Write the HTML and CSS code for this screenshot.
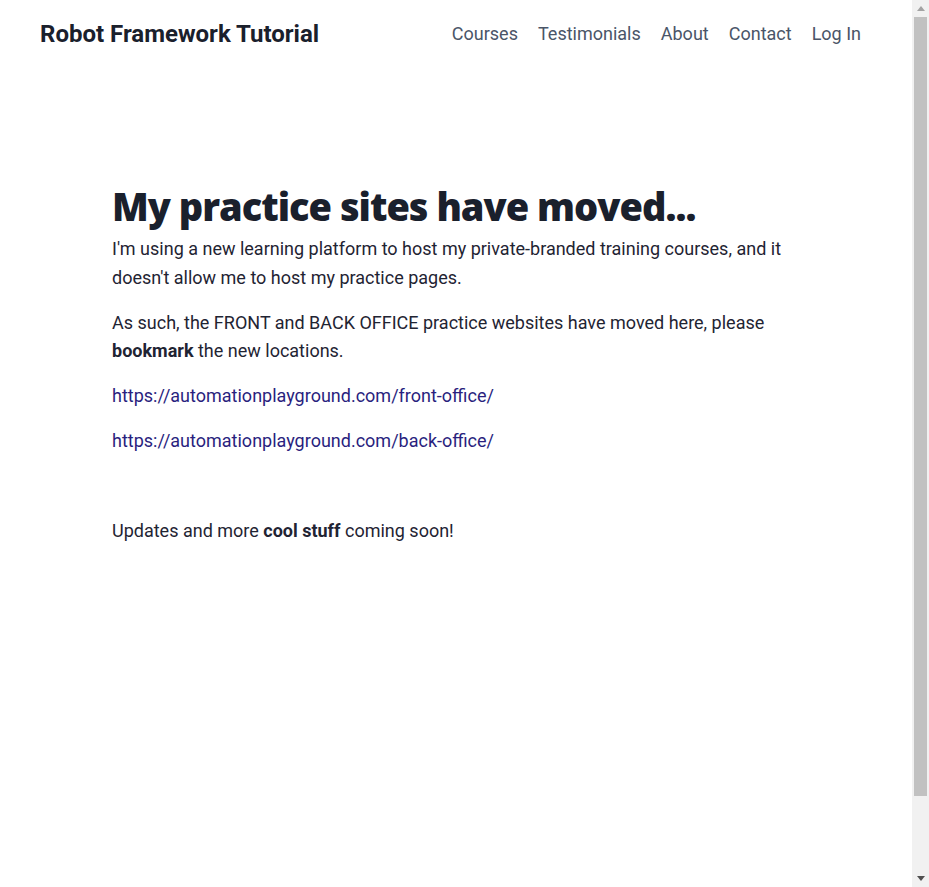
FILE: index.html
```html
<!DOCTYPE html>
<html lang="en">
<head>
<meta charset="utf-8">
<title>Robot Framework Tutorial</title>
<link rel="stylesheet" href="styles.css">
</head>
<body>
<div class="page">
<header class="site-header">
  <div class="brand">Robot Framework Tutorial</div>
  <nav class="nav">
    <a href="#">Courses</a>
    <a href="#">Testimonials</a>
    <a href="#">About</a>
    <a href="#">Contact</a>
    <a href="#">Log In</a>
  </nav>
</header>
<main class="content">
  <h1 class="title">My practice sites have moved...</h1>
  <p>I'm using a new learning platform to host my private-branded training courses, and it doesn't allow me to host my practice pages.</p>
  <p>As such, the FRONT and BACK OFFICE practice websites have moved here, please <strong>bookmark</strong> the new locations.</p>
  <p><a class="link" href="#">https://automationplayground.com/front-office/</a></p>
  <p><a class="link" href="#">https://automationplayground.com/back-office/</a></p>
  <p>&nbsp;</p>
  <p>Updates and more <strong>cool stuff</strong> coming soon!</p>
</main>
</div>
<div class="scrollbar" aria-hidden="true">
  <div class="sb-btn">
    <svg width="8" height="5" viewBox="0 0 8 5"><polygon points="4,0 8,5 0,5" fill="#a3a3a3"/></svg>
  </div>
  <div class="sb-track">
    <div class="sb-thumb"></div>
  </div>
  <div class="sb-btn">
    <svg width="8" height="5" viewBox="0 0 8 5"><polygon points="0,0 8,0 4,5" fill="#505050"/></svg>
  </div>
</div>
</body>
</html>
```

FILE: styles.css
```css
html {
  height: 100%;
  overflow: hidden;
}
body {
  margin: 0;
  padding: 0;
  height: 100%;
  display: flex;
  overflow: hidden;
  font-family: Roboto, "Liberation Sans", sans-serif;
  color: #1f2433;
  background: #ffffff;
}
.page {
  flex: 1;
  min-width: 0;
  overflow: hidden;
}
.scrollbar {
  width: 17px;
  flex: none;
  display: flex;
  flex-direction: column;
  background: #f1f1f1;
}
.sb-btn {
  height: 17px;
  display: flex;
  align-items: center;
  justify-content: center;
  flex: none;
}
.sb-btn svg {
  display: block;
}
.sb-track {
  flex: 1;
  padding: 0 2px;
  display: flex;
  flex-direction: column;
}
.sb-thumb {
  height: 779px;
  background: #c1c1c1;
}
.site-header {
  display: flex;
  align-items: center;
  justify-content: space-between;
  height: 67px;
  padding: 0 51px 0 40px;
}
.brand {
  font-size: 24px;
  font-weight: 700;
  color: #1a202c;
}
.nav {
  display: flex;
  gap: 20px;
}
.nav a {
  font-size: 18px;
  color: #4a5568;
  text-decoration: none;
}
.content {
  width: 688px;
  margin: 0 auto;
  padding-top: 115px;
}
.title {
  font-family: "Open Sans", sans-serif;
  font-weight: 800;
  font-size: 38px;
  line-height: 48px;
  margin: 0 0 5px;
  color: #1a202c;
  letter-spacing: -1px;
}
.content p {
  font-size: 18px;
  line-height: 28.8px;
  margin: 0 0 16px;
}
.content strong {
  font-weight: 700;
}
.link {
  color: #2a1f7e;
  text-decoration: none;
}
```
